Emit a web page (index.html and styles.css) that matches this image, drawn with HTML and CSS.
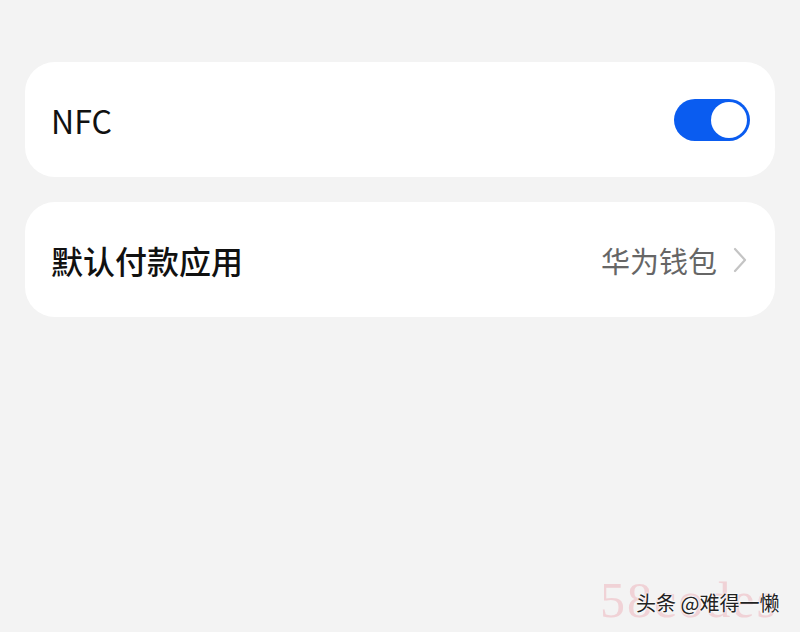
FILE: index.html
```html
<!DOCTYPE html>
<html lang="zh-CN">
<head>
    <meta charset="UTF-8">
    <title>NFC</title>
    <link rel="stylesheet" href="styles.css">
</head>
<body>
<div class="page">
    <div class="card">
        <span class="label">NFC</span>
        <div class="switch on"><div class="thumb"></div></div>
    </div>

    <div class="card">
        <span class="label strong">默认付款应用</span>
        <div class="value">
            <span>华为钱包</span>
            <svg class="chevron" width="14" height="26" viewBox="0 0 14 26">
                <path d="M2 2 L12 13 L2 24" fill="none" stroke="#c4c4c4" stroke-width="2.2" stroke-linecap="round" stroke-linejoin="round"/>
            </svg>
        </div>
    </div>
</div>

<div class="mark">
    <span class="mark-bg">58codes</span>
    <span class="mark-text">头条 @难得一懒</span>
</div>
</body>
</html>
```
FILE: styles.css
```css
body {
    margin: 0;
    width: 800px;
    height: 632px;
    background: #f3f3f3;
    font-family: "Noto Sans CJK SC", "Noto Sans", sans-serif;
    overflow: hidden;
    position: relative;
}

.page {
    padding: 62px 25px 0 25px;
    display: flex;
    flex-direction: column;
    gap: 25px;
}

.card {
    background: #ffffff;
    border-radius: 30px;
    height: 115px;
    display: flex;
    align-items: center;
    justify-content: space-between;
    padding: 0 25px 0 26px;
}

.label {
    font-size: 32px;
    color: #111;
}

.label.strong {
    font-weight: 500;
}

.switch {
    width: 76px;
    height: 42px;
    border-radius: 21px;
    background: #0a5cf0;
    position: relative;
}

.switch .thumb {
    position: absolute;
    right: 3px;
    top: 3px;
    width: 36px;
    height: 36px;
    border-radius: 50%;
    background: #fff;
}

.value {
    display: flex;
    align-items: center;
    gap: 16px;
    font-size: 29px;
    color: #666;
    padding-right: 3px;
}

.mark {
    position: absolute;
    right: 10px;
    bottom: 6px;
    width: 200px;
    height: 50px;
}

.mark-bg {
    position: absolute;
    left: 10px;
    top: -4px;
    font-family: "Liberation Serif", serif;
    font-size: 50px;
    line-height: 56px;
    color: #f0d2d6;
    letter-spacing: 2px;
}

.mark-text {
    position: absolute;
    left: 46px;
    top: 12px;
    font-size: 20px;
    color: #222;
    text-shadow: 0 0 2px #fff, 0 0 2px #fff, 0 0 3px #fff;
}
```
